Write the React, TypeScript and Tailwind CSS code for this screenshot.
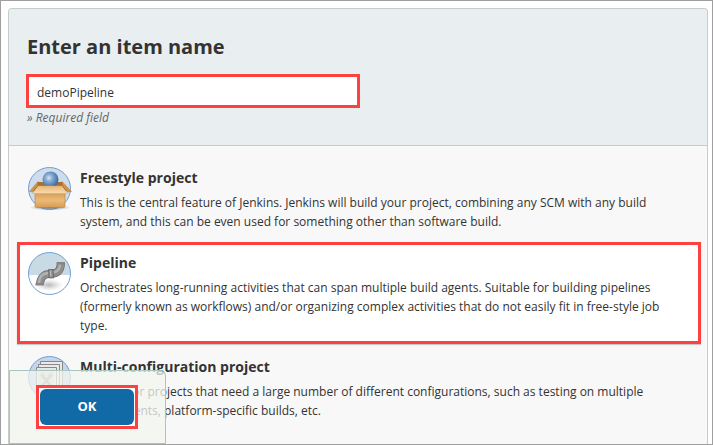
import type { ReactNode } from "react";

function BoxIcon() {
  return (
    <svg viewBox="0 0 44 44" className="size-11 overflow-visible" aria-hidden="true">
      <defs>
        <radialGradient id="ball" cx="0.4" cy="0.4" r="0.65">
          <stop offset="0" stopColor="#d7e5f3" />
          <stop offset="0.35" stopColor="#86abd3" />
          <stop offset="1" stopColor="#32649f" />
        </radialGradient>
        <linearGradient id="carton" x1="0" y1="0" x2="0" y2="1">
          <stop offset="0" stopColor="#d79c50" />
          <stop offset="0.5" stopColor="#ebbb79" />
          <stop offset="1" stopColor="#d89c52" />
        </linearGradient>
        <linearGradient id="flap" x1="0" y1="0" x2="0" y2="1">
          <stop offset="0" stopColor="#e9b777" />
          <stop offset="1" stopColor="#f8dcb2" />
        </linearGradient>
        <radialGradient id="boxShade">
          <stop offset="0" stopColor="#555" stopOpacity="0.8" />
          <stop offset="1" stopColor="#777" stopOpacity="0" />
        </radialGradient>
      </defs>
      <circle cx="21.5" cy="21.5" r="21" fill="#cfdcec" stroke="#6f9fd4" />
      <ellipse cx="22" cy="40.5" rx="21" ry="3" fill="url(#boxShade)" />
      <path d="M10 14.500 1.500 24.500l4 .5L12 19zM34 14.500l9.500 10-4 .5-7-6z" fill="#d0934a" stroke="#b47a38" strokeWidth="0.5" />
      <path d="M10 15h24l1 4H9z" fill="#a96f2d" />
      <circle cx="22.500" cy="12.500" r="8" fill="url(#ball)" />
      <path d="M7 25.500h30V39q0 1.500-1.500 1.500h-27Q7 40.500 7 39z" fill="url(#carton)" stroke="#b9803d" strokeWidth="0.6" />
      <path d="M9.500 19h25l5 7.500h-35z" fill="url(#flap)" stroke="#d8a564" strokeWidth="0.5" />
      <path d="M9.500 19 5.500 24M34.500 19l4 5" stroke="#96632b" strokeWidth="0.8" />
    </svg>
  );
}

function PipeIcon() {
  return (
    <svg viewBox="0 0 44 44" className="size-11" aria-hidden="true">
      <defs>
        <clipPath id="pipeClip">
          <circle cx="21.5" cy="21.5" r="21" />
        </clipPath>
        <radialGradient id="pipeShade">
          <stop offset="0" stopColor="#999" stopOpacity="0.7" />
          <stop offset="1" stopColor="#bbb" stopOpacity="0" />
        </radialGradient>
      </defs>
      <g clipPath="url(#pipeClip)">
        <path d="M0 0h44v44H0z" fill="#fff" />
        <path d="M0 0h44v23H0z" fill="#c8dbe5" />
        <ellipse cx="21" cy="33" rx="14" ry="6" fill="url(#pipeShade)" />
      </g>
      <g fill="none">
        <path d="M12 33c0-7 4-11 9-11l3.500-.4c5.500-.5 8.500-4 8.500-11.400" stroke="#6e6e6e" strokeWidth="8" />
        <path d="M12 32.500c0-7 4-10.500 9-10.500l3.500-.4c5.500-.5 8.500-4 8.500-10.900" stroke="#8f8f8f" strokeWidth="6.500" />
        <path d="M11 31c.2-6.500 4-9.800 9.500-10l3.500-.4c5-.4 8-3.600 8-9.100" stroke="#b2b2b2" strokeWidth="2.500" />
      </g>
      <path d="M28.500 10h8.500v2.500h-8.500zM7.500 31h8.500v2.500H7.500z" fill="#858585" />
      <path d="M20.500 17.500h4.500l.8 8.500h-4.800z" fill="#8a8a8a" stroke="#606060" strokeWidth="0.7" />
      <path d="M22.500 18.500l.3 6" stroke="#bdbdbd" strokeWidth="1.3" />
      <circle cx="21.5" cy="21.5" r="21" fill="none" stroke="#6f9fd4" />
    </svg>
  );
}

function MatrixIcon() {
  return (
    <svg viewBox="0 0 44 44" className="size-11" aria-hidden="true">
      <circle cx="21.5" cy="21.5" r="21" fill="#c6d5e9" stroke="#6f9fd4" />
      <g fill="#e9e9e7" stroke="#888" strokeWidth="1">
        <path d="M12.500 5.500h22v26h-22z" />
        <path d="M10.500 8.500h21v27h-21z" />
        <path d="M8.500 11.500h20v27h-20z" />
      </g>
      <path d="M10.500 13.500h16v23h-16z" fill="#dcdcda" />
      <path d="m14 19 9 11M23 19 14 30" stroke="#a0a0a0" strokeWidth="2.500" />
      <path d="m13 18 3 3M24 18l-3 3" stroke="#b0b0b0" strokeWidth="4" />
    </svg>
  );
}

type ItemProps = { icon: ReactNode; title: string; selected?: boolean; children: ReactNode };

function Item({ icon, title, selected = false, children }: ItemProps) {
  return (
    <li
      className={
        selected
          ? "flex gap-2 border-3 border-[#ff4040] bg-white py-1.5 pr-7 pl-2 shadow-[0_1px_1px_#c8c8c8]"
          : "flex gap-2 border-3 border-transparent py-1.5 pr-7 pl-2"
      }
    >
      <div className="shrink-0 pt-px">{icon}</div>
      <div>
        <h2 className="text-[14px] leading-6 font-bold">{title}</h2>
        <p className="mt-[3px] text-[12px] leading-[19px]">{children}</p>
      </div>
    </li>
  );
}

export default function App() {
  return (
    <div className="relative flex h-screen flex-col overflow-hidden border border-[#9f9f9f] bg-white font-['Open_Sans','Noto_Sans',sans-serif] text-[#333]">
      <form className="mx-[7px] mr-1 mt-[7px] flex flex-1 flex-col rounded-t-sm border border-b-0 border-[#c8cbcc] bg-[#f8f8f8]">
        <header className="rounded-t-sm border-b border-[#c8cbcc] bg-[#e9eef1] px-[17px] pt-6 pb-[18px]">
          <h1 className="pl-px text-[20px] leading-7 font-bold">
            <label htmlFor="name">Enter an item name</label>
          </h1>
          <input
            id="name"
            type="text"
            defaultValue="demoPipeline"
            className="mt-[13px] block h-[34px] w-full max-w-[334px] border-3 border-[#ff4040] bg-white px-2 pt-0.5 text-[12px] outline-none"
          />
          <p className="pl-px text-[12px] leading-[19px] text-[#666] italic">» Required field</p>
        </header>
        <ul className="mt-[11px] mr-1.5 ml-2 flex flex-col gap-0.5">
          <Item icon={<BoxIcon />} title="Freestyle project">
            This is the central feature of Jenkins. Jenkins will build your project, combining any SCM with any build
            system, and this can be even used for something other than software build.
          </Item>
          <Item icon={<PipeIcon />} title="Pipeline" selected>
            Orchestrates long-running activities that can span multiple build agents. Suitable for building pipelines
            (formerly known as workflows) and/or organizing complex activities that do not easily fit in free-style job
            type.
          </Item>
          <Item icon={<MatrixIcon />} title="Multi-configuration project">
            Suitable for projects that need a large number of different configurations, such as testing on multiple
            environments, platform-specific builds, etc.
          </Item>
        </ul>
        <div className="absolute bottom-0 left-2 rounded-tr-md border border-[#a9c6bd] bg-[#f3f6f0]/75 py-3.5 pr-[27px] pl-[26px]">
          <div className="border-3 border-[#ff4040] bg-white p-px">
            <button type="button" className="block h-9 w-[94px] rounded-md bg-[#1169a6] text-[13px] font-bold text-white">
              OK
            </button>
          </div>
        </div>
      </form>
    </div>
  );
}
